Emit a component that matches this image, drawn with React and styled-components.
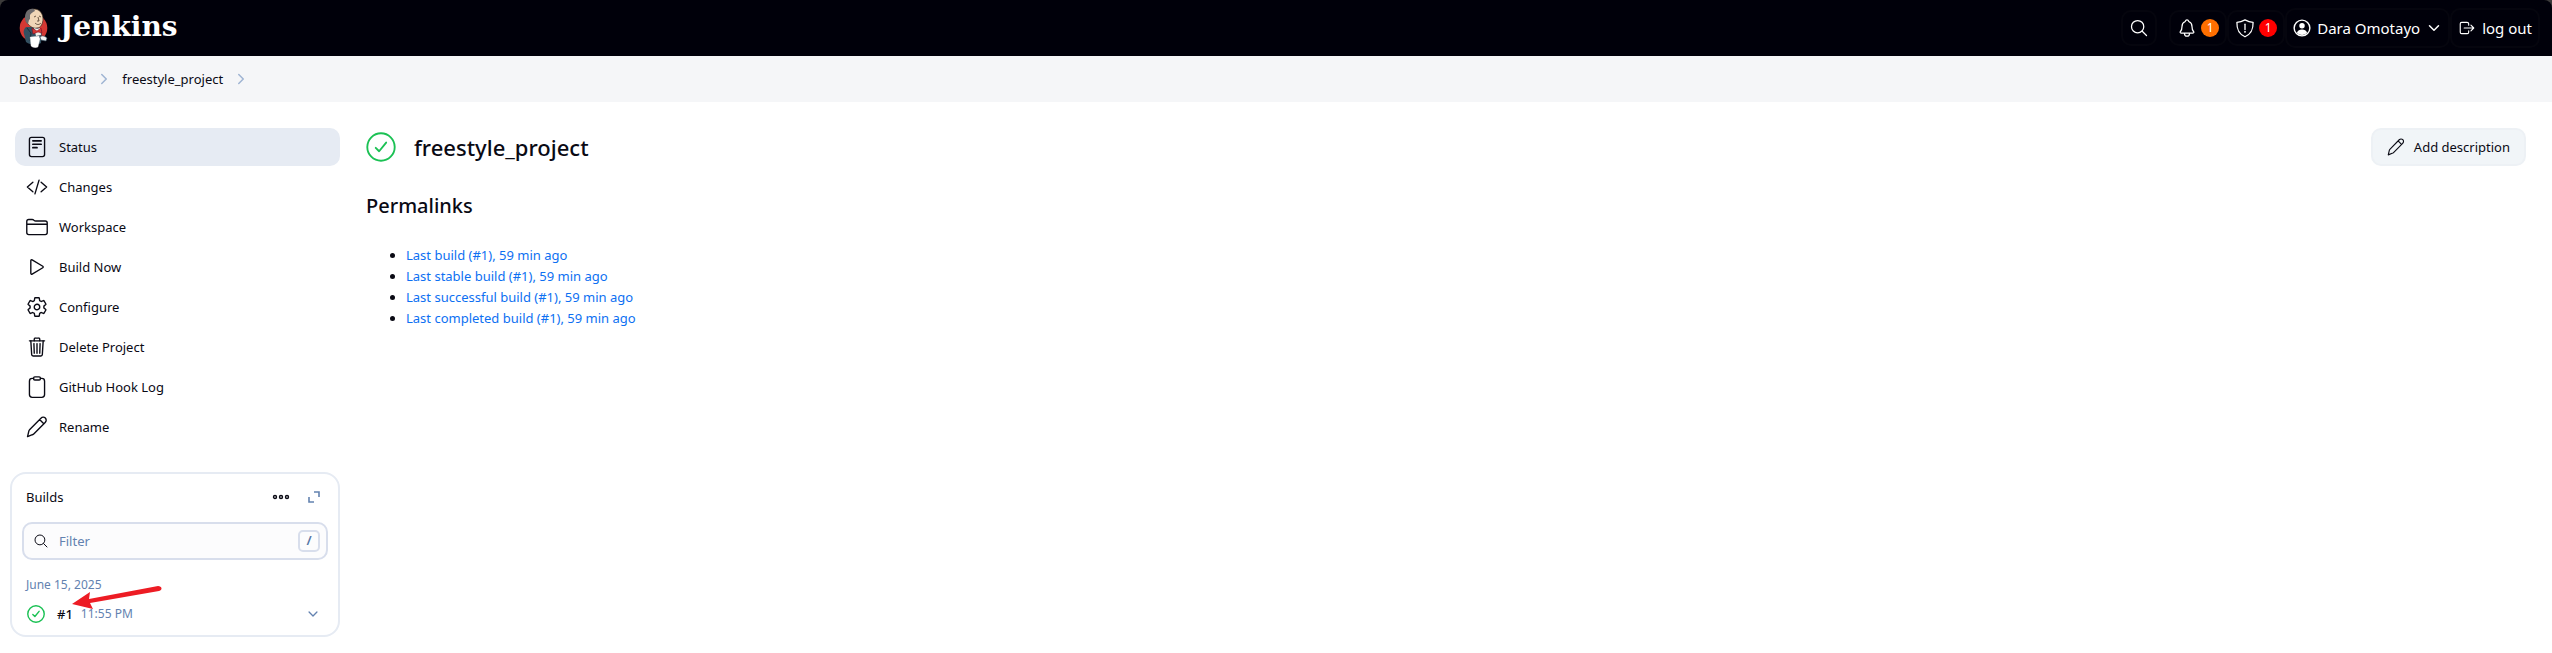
import React from "react";
import styled, { createGlobalStyle, css } from "styled-components";
import {
  IoSearchOutline,
  IoNotificationsOutline,
  IoLogOutOutline,
  IoCodeSlashOutline,
  IoPlayOutline,
  IoSettingsOutline,
  IoTrashOutline,
  IoChevronForward,
  IoChevronDown,
} from "react-icons/io5";

const GlobalStyle = createGlobalStyle`
  * { box-sizing: border-box; }
  body {
    margin: 0;
    background: #fff;
    color: #0a0a14;
    font-family: "Noto Sans", "Open Sans", sans-serif;
    font-size: 13px;
    line-height: 20px;
  }
  button, input { font: inherit; color: inherit; }
  a { text-decoration: none; color: inherit; }
  svg { display: block; flex: none; }
`;

const HeaderBackdrop = styled.div`
  background: #3c3b3b;
`;

const Header = styled.header`
  display: flex;
  align-items: center;
  height: 56px;
  padding: 0 12px 0 19px;
  border-radius: 8px 8px 0 0;
  background: #00000a;
  color: #fff;
`;

const Brand = styled.a`
  display: flex;
  align-items: center;
  gap: 12px;
  margin-right: auto;
  font-family: "DejaVu Serif", serif;
  font-size: 28px;
  font-weight: 700;
  line-height: 32px;
`;

const BrandName = styled.span`
  padding-bottom: 2px;
`;

const headerControl = css`
  display: flex;
  align-items: center;
  padding: 0 6px;
  border: 2px solid rgba(255, 255, 255, 0.02);
  border-radius: 10px;
  background: none;
  color: #fff;
`;

const HeaderButton = styled.button`
  ${headerControl}
  gap: 4px;
  height: 36px;
  margin-right: ${(p) => (p.$spaced ? "12px" : "0")};
`;

const HeaderLink = styled.a`
  ${headerControl}
  gap: 6px;
  height: 40px;
  font-size: 15px;
`;

const Badge = styled.span`
  width: 18px;
  height: 18px;
  border-radius: 50%;
  background: ${(p) => p.$color};
  font-size: 12px;
  line-height: 18px;
  text-align: center;
`;

const Breadcrumbs = styled.nav`
  display: flex;
  align-items: center;
  gap: 10px;
  height: 46px;
  padding: 0 19px;
  background: #f5f6f8;
  svg { color: #9fb4d3; }
`;

const Page = styled.div`
  display: grid;
  grid-template-columns: 330px minmax(0, 1fr);
  gap: 26px;
  padding: 26px 26px 16px 10px;
`;

const Tasks = styled.nav`
  display: flex;
  flex-direction: column;
  gap: 2px;
  padding-left: 5px;
`;

const Task = styled.a`
  display: flex;
  align-items: center;
  gap: 11px;
  height: 38px;
  padding: 0 11px;
  border-radius: 10px;
  background: ${(p) => (p.$active ? "#e6ebf3" : "transparent")};
`;

const BuildsCard = styled.section`
  margin-top: 26px;
  padding: 10px;
  border: 2px solid #e6ebf3;
  border-radius: 16px;
`;

const BuildsHead = styled.div`
  display: flex;
  align-items: center;
  height: 26px;
  padding: 0 8px 0 4px;
`;

const BuildsTitle = styled.h2`
  margin: 0 auto 0 0;
  font-size: 13px;
  font-weight: 400;
`;

const IconButton = styled.button`
  display: flex;
  margin-left: ${(p) => (p.$spaced ? "18px" : "0")};
  padding: 0;
  border: 0;
  background: none;
  color: ${(p) => p.$color || "#0a0a14"};
`;

const FilterBox = styled.label`
  display: flex;
  align-items: center;
  gap: 10px;
  height: 38px;
  margin-top: 12px;
  padding: 0 6px 0 9px;
  border: 2px solid #d8deec;
  border-radius: 10px;
  background: #fcfcfd;
`;

const FilterInput = styled.input`
  flex: 1;
  min-width: 0;
  padding: 0;
  border: 0;
  outline: 0;
  background: none;
  &::placeholder { color: #6382b0; opacity: 1; }
`;

const Key = styled.kbd`
  width: 22px;
  height: 22px;
  border: 2px solid #d8deec;
  border-radius: 5px;
  color: #5574a4;
  font-family: inherit;
  font-weight: 600;
  line-height: 17px;
  text-align: center;
`;

const BuildDate = styled.div`
  margin-top: 15px;
  padding-left: 4px;
  color: #6382b0;
  font-size: 12px;
`;

const BuildRow = styled.div`
  position: relative;
  display: flex;
  align-items: center;
  height: 30px;
  margin: 4px 0 -4px;
  padding: 0 8px 0 5px;
`;

const BuildNumber = styled.a`
  margin: 0 8px 0 12px;
  font-weight: 500;
`;

const BuildTime = styled.a`
  margin-right: auto;
  color: #6382b0;
  font-size: 12px;
`;

const Arrow = styled.svg`
  position: absolute;
  left: 50px;
  top: -14px;
`;

const TitleBar = styled.div`
  display: flex;
  align-items: center;
  gap: 18px;
  height: 38px;
`;

const Title = styled.h1`
  margin: 0 auto 0 0;
  font-size: 22px;
  font-weight: 500;
  line-height: 28px;
`;

const DescriptionButton = styled.button`
  display: flex;
  align-items: center;
  gap: 9px;
  height: 38px;
  padding: 0 14px;
  border: 2px solid #edf1f5;
  border-radius: 10px;
  background: #f1f5f8;
`;

const Subtitle = styled.h2`
  margin: 26px 0 0;
  font-size: 20px;
  font-weight: 500;
  line-height: 28px;
`;

const Permalinks = styled.ul`
  margin: 25px 0 0;
  padding-left: 40px;
  line-height: 21px;
  a { color: #0d70f2; }
`;

const Line = ({ size = 22, width = 32, children }) => (
  <svg width={size} height={size} viewBox="0 0 512 512" fill="none" stroke="currentColor" strokeWidth={width} strokeLinecap="round" strokeLinejoin="round" aria-hidden="true">
    {children}
  </svg>
);

const StatusIcon = () => (
  <Line>
    <rect x="80" y="32" width="352" height="448" rx="48" />
    <path d="M160 112h192M160 192h192M160 272h96" strokeWidth="40" />
  </Line>
);

const FolderIcon = () => (
  <Line>
    <path d="M18 384V128c0-28 20-48 46-48h80c14 0 24 4 34 14l12 10c10 8 20 12 34 12h224c26 0 46 20 46 46v222c0 26-20 48-46 48H64c-26 0-46-22-46-48zM18 192h476" />
  </Line>
);

const ClipboardIcon = () => (
  <Line>
    <path d="M336 56h32c35 0 64 29 64 64v312c0 35-29 64-64 64H144c-35 0-64-29-64-64V120c0-35 29-64 64-64h32" />
    <rect x="176" y="20" width="160" height="72" rx="30" />
  </Line>
);

const PencilIcon = ({ size }) => (
  <Line size={size}>
    <path d="M36 480l30-128c4-16 10-26 22-38L348 50c30-30 74-30 102-2 28 28 26 72-4 102L186 414c-12 12-22 18-38 22zM316 84l98 98" />
  </Line>
);

const CheckIcon = ({ size, width = 32 }) => (
  <svg width={size} height={size} viewBox="0 0 512 512" fill="none" stroke="#1bc154" strokeWidth={width} strokeLinecap="round" strokeLinejoin="round" aria-hidden="true">
    <circle cx="256" cy="256" r="234" />
    <path d="M344 180L224 328l-58-58" />
  </svg>
);

const ShieldIcon = () => (
  <Line size={20} width={34}>
    <path d="M463 112c-78-4-130-20-207-64-77 44-129 60-207 64-4 164 28 290 207 368 179-78 211-204 207-368z" />
    <path d="M256 160v132" />
    <circle cx="256" cy="352" r="8" />
  </Line>
);

const UserIcon = () => (
  <Line size={18}>
    <circle cx="256" cy="256" r="224" strokeWidth="40" />
    <circle cx="256" cy="192" r="78" fill="currentColor" stroke="none" />
    <path d="M112 392c22-66 74-92 144-92s122 26 144 92c-84 84-204 84-288 0z" fill="currentColor" stroke="none" />
  </Line>
);

const DotsIcon = () => (
  <svg width="18" height="18" viewBox="0 0 18 18" fill="none" stroke="currentColor" strokeWidth="1.4" aria-hidden="true">
    <circle cx="3" cy="9" r="1.5" />
    <circle cx="9" cy="9" r="1.5" />
    <circle cx="15" cy="9" r="1.5" />
  </svg>
);

const ExpandIcon = () => (
  <svg width="12" height="12" viewBox="0 0 12 12" fill="none" stroke="currentColor" strokeWidth="1.6" aria-hidden="true">
    <path d="M6 1h5v5M1 6v5h5" />
  </svg>
);

const JenkinsLogo = () => (
  <svg width="29" height="40" viewBox="0 0 29 40" aria-hidden="true">
    <circle cx="14.5" cy="20" r="13.8" fill="#d33833" />
    <path d="M7 19c-2 2-3 4-2 7l2 8c4 3 11 4 15 1l1-13-6-3z" fill="#335061" />
    <path d="M8 20l4 5-1 8" fill="none" stroke="#1b2c38" strokeWidth="1" />
    <path d="M7 10C7 4 10 1 15 1c6 0 9 5 9 10 0 4-2 9-6 9-4 1-7-2-9-4-2-2-2-4-2-6z" fill="#f0d6b7" stroke="#3a2b20" strokeWidth=".7" />
    <path d="M15 1C9 0 6 4 6 10c0 3 1 5 3 6l1-4 1-1 0-4c1-2 3-3 5-4z" fill="#6d6b6d" />
    <path d="M15 9l2-1M20 8l2 1M16 15c2 2 4 2 6 0M19 9l1 4h-2" fill="none" stroke="#4a3728" strokeWidth=".8" />
    <path d="M15 20c2 1 4 1 6 0l1 7-5 1z" fill="#f3efe9" />
    <path d="M13 20l5 3 4-3 1 5-4-1-5 2z" fill="#d33833" stroke="#81001a" strokeWidth=".5" />
    <path d="M11 29l9-1 1 3-2 8c-2 1-5 1-7-1z" fill="#fff" stroke="#ccc" strokeWidth=".3" />
    <path d="M21 29c2-2 5-1 7 1l-1 3-5-1z" fill="#f3f3f3" stroke="#335061" strokeWidth=".6" />
  </svg>
);

const tasks = [
  ["Status", <StatusIcon />],
  ["Changes", <IoCodeSlashOutline size={22} />],
  ["Workspace", <FolderIcon />],
  ["Build Now", <IoPlayOutline size={22} />],
  ["Configure", <IoSettingsOutline size={22} />],
  ["Delete Project", <IoTrashOutline size={22} />],
  ["GitHub Hook Log", <ClipboardIcon />],
  ["Rename", <PencilIcon size={22} />],
];

const permalinks = [
  "Last build (#1), 59 min ago",
  "Last stable build (#1), 59 min ago",
  "Last successful build (#1), 59 min ago",
  "Last completed build (#1), 59 min ago",
];

export default function App() {
  return (
    <>
      <GlobalStyle />
      <HeaderBackdrop>
        <Header>
          <Brand href="#">
            <JenkinsLogo />
            <BrandName>Jenkins</BrandName>
          </Brand>
          <HeaderButton $spaced aria-label="Search">
            <IoSearchOutline size={20} />
          </HeaderButton>
          <HeaderButton aria-label="Notifications">
            <IoNotificationsOutline size={20} />
            <Badge $color="#ff6f00">1</Badge>
          </HeaderButton>
          <HeaderButton aria-label="Security warnings">
            <ShieldIcon />
            <Badge $color="#ff0000">1</Badge>
          </HeaderButton>
          <HeaderLink href="#">
            <UserIcon />
            <span>Dara Omotayo</span>
            <IoChevronDown size={16} />
          </HeaderLink>
          <HeaderLink href="#">
            <IoLogOutOutline size={18} />
            <span>log out</span>
          </HeaderLink>
        </Header>
      </HeaderBackdrop>

      <Breadcrumbs aria-label="Breadcrumbs">
        <a href="#">Dashboard</a>
        <IoChevronForward size={16} />
        <a href="#">freestyle_project</a>
        <IoChevronForward size={16} />
      </Breadcrumbs>

      <Page>
        <aside>
          <Tasks>
            {tasks.map(([label, icon], i) => (
              <Task key={label} href="#" $active={i === 0}>
                {icon}
                {label}
              </Task>
            ))}
          </Tasks>
          <BuildsCard>
            <BuildsHead>
              <BuildsTitle>Builds</BuildsTitle>
              <IconButton aria-label="More actions"><DotsIcon /></IconButton>
              <IconButton $spaced $color="#6382b0" aria-label="Expand"><ExpandIcon /></IconButton>
            </BuildsHead>
            <FilterBox>
              <IoSearchOutline size={16} />
              <FilterInput placeholder="Filter" aria-label="Filter" />
              <Key>/</Key>
            </FilterBox>
            <BuildDate>June 15, 2025</BuildDate>
            <BuildRow>
              <CheckIcon size={18} width={40} />
              <BuildNumber href="#">#1</BuildNumber>
              <BuildTime href="#">11:55 PM</BuildTime>
              <IconButton $color="#6382b0" aria-label="Build actions"><IoChevronDown size={14} /></IconButton>
              <Arrow width="92" height="28" viewBox="0 0 92 28" aria-hidden="true">
                <path d="M0 19L18 7l-1 7 69-13c4 0 5 4 1 5L18 18l3 6z" fill="#ed1c24" />
              </Arrow>
            </BuildRow>
          </BuildsCard>
        </aside>

        <main>
          <TitleBar>
            <CheckIcon size={30} />
            <Title>freestyle_project</Title>
            <DescriptionButton>
              <PencilIcon size={18} />
              Add description
            </DescriptionButton>
          </TitleBar>
          <Subtitle>Permalinks</Subtitle>
          <Permalinks>
            {permalinks.map((text) => (
              <li key={text}><a href="#">{text}</a></li>
            ))}
          </Permalinks>
        </main>
      </Page>
    </>
  );
}
